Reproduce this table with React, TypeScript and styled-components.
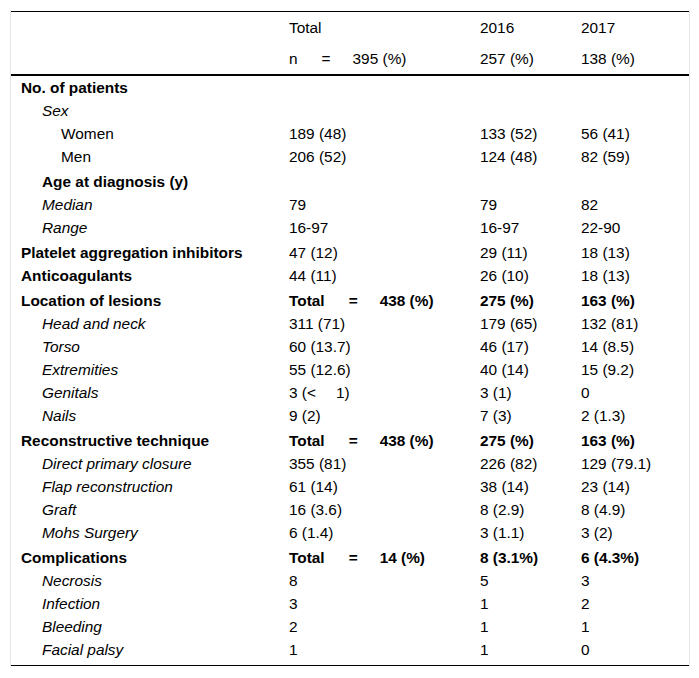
import React from "react";
import styled, { createGlobalStyle } from "styled-components";

type Cell = React.ReactNode;

interface RowData {
  label: string;
  level: 0 | 1 | 2;
  bold?: boolean;
  italic?: boolean;
  gap?: boolean;
  strongValues?: boolean;
  values?: [Cell, Cell, Cell];
}

const GlobalStyle = createGlobalStyle`
  body {
    margin: 0;
    background: #fff;
    font-family: "Liberation Sans", Arial, sans-serif;
    color: #000;
  }
`;

const Gap = styled.span<{ $w: number }>`
  display: inline-block;
  width: ${(p) => p.$w}px;
`;

const totalOf = (n: string) => (
  <>
    Total<Gap $w={24} />=<Gap $w={22} />
    {n} (%)
  </>
);

const rows: RowData[] = [
  { label: "No. of patients", level: 0, bold: true },
  { label: "Sex", level: 1, italic: true },
  { label: "Women", level: 2, values: ["189 (48)", "133 (52)", "56 (41)"] },
  { label: "Men", level: 2, values: ["206 (52)", "124 (48)", "82 (59)"] },
  { label: "Age at diagnosis (y)", level: 1, bold: true, gap: true },
  { label: "Median", level: 1, italic: true, values: ["79", "79", "82"] },
  { label: "Range", level: 1, italic: true, values: ["16-97", "16-97", "22-90"] },
  { label: "Platelet aggregation inhibitors", level: 0, bold: true, gap: true, values: ["47 (12)", "29 (11)", "18 (13)"] },
  { label: "Anticoagulants", level: 0, bold: true, values: ["44 (11)", "26 (10)", "18 (13)"] },
  { label: "Location of lesions", level: 0, bold: true, gap: true, strongValues: true, values: [totalOf("438"), "275 (%)", "163 (%)"] },
  { label: "Head and neck", level: 1, italic: true, values: ["311 (71)", "179 (65)", "132 (81)"] },
  { label: "Torso", level: 1, italic: true, values: ["60 (13.7)", "46 (17)", "14 (8.5)"] },
  { label: "Extremities", level: 1, italic: true, values: ["55 (12.6)", "40 (14)", "15 (9.2)"] },
  {
    label: "Genitals",
    level: 1,
    italic: true,
    values: [
      <>
        3 (&lt;<Gap $w={20} />1)
      </>,
      "3 (1)",
      "0",
    ],
  },
  { label: "Nails", level: 1, italic: true, values: ["9 (2)", "7 (3)", "2 (1.3)"] },
  { label: "Reconstructive technique", level: 0, bold: true, gap: true, strongValues: true, values: [totalOf("438"), "275 (%)", "163 (%)"] },
  { label: "Direct primary closure", level: 1, italic: true, values: ["355 (81)", "226 (82)", "129 (79.1)"] },
  { label: "Flap reconstruction", level: 1, italic: true, values: ["61 (14)", "38 (14)", "23 (14)"] },
  { label: "Graft", level: 1, italic: true, values: ["16 (3.6)", "8 (2.9)", "8 (4.9)"] },
  { label: "Mohs Surgery", level: 1, italic: true, values: ["6 (1.4)", "3 (1.1)", "3 (2)"] },
  { label: "Complications", level: 0, bold: true, gap: true, strongValues: true, values: [totalOf("14"), "8 (3.1%)", "6 (4.3%)"] },
  { label: "Necrosis", level: 1, italic: true, values: ["8", "5", "3"] },
  { label: "Infection", level: 1, italic: true, values: ["3", "1", "2"] },
  { label: "Bleeding", level: 1, italic: true, values: ["2", "1", "1"] },
  { label: "Facial palsy", level: 1, italic: true, values: ["1", "1", "0"] },
];

const App: React.FC = () => (
  <>
    <GlobalStyle />
    <Frame>
      <Table>
        <colgroup>
          <col style={{ width: 268 }} />
          <col style={{ width: 191 }} />
          <col style={{ width: 101 }} />
          <col />
        </colgroup>
        <thead>
          <HeadRow>
            <HeadCell />
            <HeadCell>Total</HeadCell>
            <HeadCell>2016</HeadCell>
            <HeadCell>2017</HeadCell>
          </HeadRow>
          <HeadRow $last>
            <HeadCell />
            <HeadCell>
              n<Gap $w={24} />=<Gap $w={22} />
              395 (%)
            </HeadCell>
            <HeadCell>257 (%)</HeadCell>
            <HeadCell>138 (%)</HeadCell>
          </HeadRow>
        </thead>
        <tbody>
          {rows.map((row, i) => (
            <BodyRow key={i} $gap={row.gap} $end={i === rows.length - 1}>
              <LabelCell $level={row.level} $bold={row.bold} $italic={row.italic}>
                {row.label}
              </LabelCell>
              {[0, 1, 2].map((c) => (
                <ValueCell key={c} $bold={row.strongValues}>
                  {row.values ? row.values[c] : null}
                </ValueCell>
              ))}
            </BodyRow>
          ))}
        </tbody>
      </Table>
    </Frame>
  </>
);

const Frame = styled.div`
  width: 678px;
  margin: 10px 0 0 10px;
  padding-top: 1px;
  border-left: 1px solid #e4e4e4;
  border-right: 1px solid #e4e4e4;
`;

const Table = styled.table`
  width: 100%;
  border-collapse: collapse;
  table-layout: fixed;
  border-top: 1px solid #000;
  border-bottom: 1px solid #000;
  font-size: 15.4px;
  line-height: 17px;
`;

const HeadRow = styled.tr<{ $last?: boolean }>`
  border-bottom: ${(p) => (p.$last ? "2px solid #000" : "none")};
`;

const HeadCell = styled.th`
  height: 31px;
  padding: 0 10px;
  text-align: left;
  font-weight: 400;
  vertical-align: middle;
  white-space: nowrap;
`;

const BodyRow = styled.tr<{ $gap?: boolean; $end?: boolean }>`
  & > td {
    padding-top: ${(p) => (p.$gap ? 5 : 3)}px;
    padding-bottom: ${(p) => (p.$end ? 7 : 3)}px;
  }
`;

const BodyCell = styled.td<{ $bold?: boolean }>`
  padding-left: 10px;
  padding-right: 10px;
  font-weight: ${(p) => (p.$bold ? 700 : 400)};
  vertical-align: top;
  white-space: nowrap;
`;

const LabelCell = styled(BodyCell)<{ $level: number; $italic?: boolean }>`
  && {
    padding-left: ${(p) => [10, 31, 50][p.$level]}px;
  }
  font-style: ${(p) => (p.$italic ? "italic" : "normal")};
`;

const ValueCell = styled(BodyCell)``;

export default App;
